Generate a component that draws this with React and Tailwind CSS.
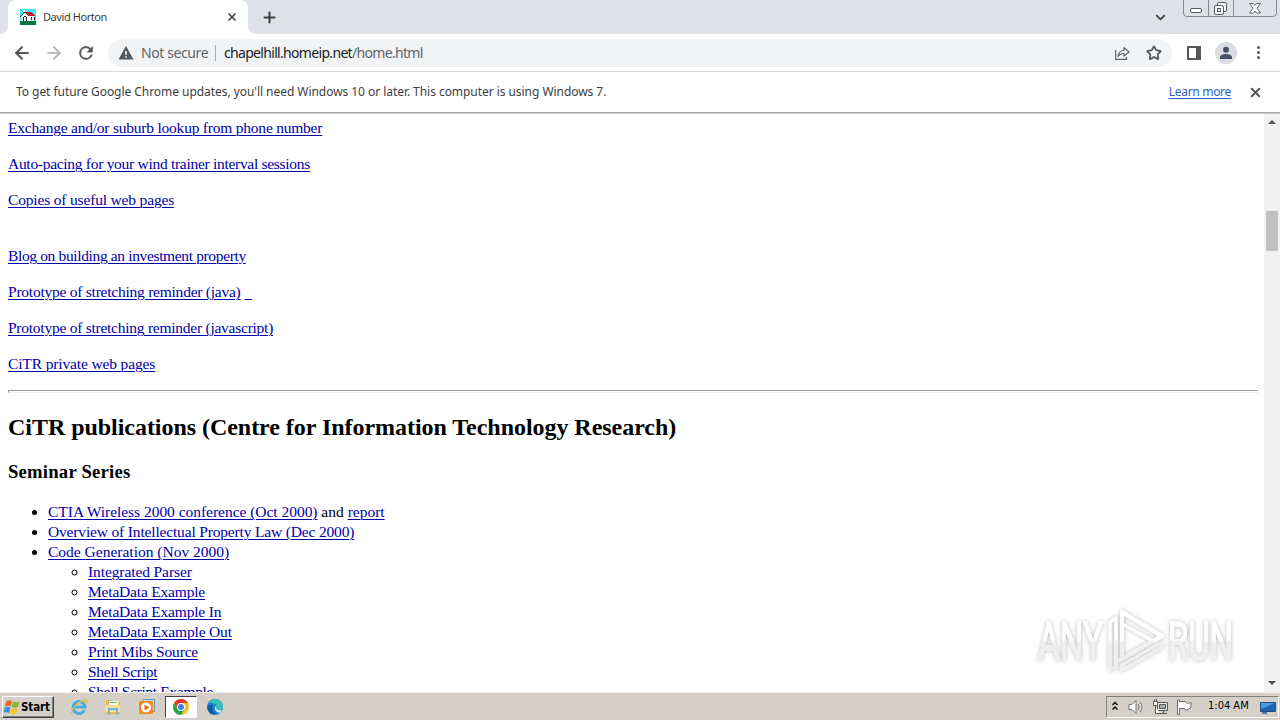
import { ArrowLeft, ArrowRight, ChevronDown, Plus, Star, X } from "lucide-react";

const topLinks = [
  { label: "Exchange and/or suburb lookup from phone number", style: "tracking-[-0.22px]" },
  { label: "Auto-pacing for your wind trainer interval sessions", style: "tracking-[-0.29px]" },
  { label: "Copies of useful web pages", style: "tracking-[-0.17px] mb-9" },
  { label: "Blog on building an investment property", style: "tracking-[-0.36px]" },
  { label: "Prototype of stretching reminder (java)", style: "tracking-[-0.24px]", trailing: true },
  { label: "Prototype of stretching reminder (javascript)", style: "tracking-[-0.25px]" },
  { label: "CiTR private web pages", style: "tracking-[-0.14px]" }
];

const codeLinks = [
  { label: "Integrated Parser", style: "tracking-[-0.1px]" },
  { label: "MetaData Example", style: "tracking-[-0.19px]" },
  { label: "MetaData Example In", style: "tracking-[-0.19px]" },
  { label: "MetaData Example Out", style: "tracking-[-0.17px]" },
  { label: "Print Mibs Source", style: "tracking-[-0.16px]" },
  { label: "Shell Script", style: "tracking-[-0.3px]" },
  { label: "Shell Script Example", style: "tracking-[-0.33px]" }
];

function Link({ children, className = "" }) {
  return (
    <a href="#" className={`text-[#0000a8] underline decoration-1 underline-offset-2 ${className}`}>
      {children}
    </a>
  );
}

function HouseIcon() {
  return (
    <svg className="h-4 w-4" viewBox="0 0 16 16" shapeRendering="crispEdges">
      <rect width="16" height="16" fill="#3fe8f0" />
      <rect y="12" width="16" height="4" fill="#087840" />
      <path d="M1 7l4-3 4 3h5v5H1z" fill="#fff" />
      <path d="M5 3h7l3 4H9z" fill="#d61a1a" />
      <path d="M0 8l5-5 4 4" fill="none" stroke="#333" />
      <path d="M3 8h1v4H3zM6 8h1v4H6zM4 7h2v1H4zM11 8h1v3h-1zM14 8h1v3h-1z" fill="#222" />
      <path d="M3 1h2v2H3z" fill="#fff" />
    </svg>
  );
}

function TabStrip() {
  return (
    <div className="relative flex h-[34px] bg-[#dee1e6]">
      <div className="h-full w-2 bg-white">
        <div className="h-full rounded-br-lg bg-[#dee1e6]" />
      </div>
      <div className="flex h-full w-60 items-center rounded-t-lg bg-white pl-3 pr-[10px]">
        <HouseIcon />
        <span className="ml-[7px] flex-1 font-['Noto_Sans','Open_Sans',sans-serif] text-[11px] tracking-[-0.42px] text-[#3c4043]">
          David Horton
        </span>
        <X size={12} strokeWidth={3.4} color="#45494d" />
      </div>
      <div className="h-full w-2 bg-white">
        <div className="h-full rounded-bl-lg bg-[#dee1e6]" />
      </div>
      <div className="flex flex-1 items-center pl-[5px]">
        <Plus size={17} strokeWidth={2.9} color="#3c4043" />
      </div>
      <div className="mr-[15px] flex items-center">
        <ChevronDown size={15} strokeWidth={3.2} color="#45494d" />
      </div>
      <svg className="mr-[3px] h-[18px] w-[94px]" viewBox="0 0 94 18" fill="none" stroke="#85888f">
        <path d="M.5 0v13q0 3.500 3.500 3.500h86q3.500 0 3.500-3.500V0M25.500 0v16M50.500 0v16" />
        <rect x="7.500" y="8.500" width="11" height="4" rx="1.500" fill="#fff" stroke="#555960" />
        <g stroke="#555960" fill="#fff">
          <rect x="34.500" y="2.500" width="9" height="9" rx="1.500" />
          <rect x="31.500" y="5.500" width="9" height="9" rx="1.500" />
          <rect x="34.500" y="8.500" width="3" height="3" />
          <path d="M66.500 3.500h4l1.500 2 1.500-2h4l-3.500 4.700 3.500 4.800h-4l-1.500-2-1.500 2h-4l3.500-4.800z" strokeWidth=".9" />
        </g>
      </svg>
    </div>
  );
}

function Toolbar() {
  return (
    <div className="flex h-[38px] items-center border-b border-[#d5d7da] bg-white text-[#5f6368]">
      <ArrowLeft className="ml-3" size={20} strokeWidth={2.5} color="#54575b" />
      <ArrowRight className="ml-3" size={20} strokeWidth={2.5} color="#b9bbbe" />
      <svg className="ml-3 h-5 w-5" viewBox="0 0 24 24" fill="#54575b" stroke="#54575b" strokeWidth=".4">
        <path d="M17.65 6.350A7.960 7.960 0 0 0 12 4a8 8 0 1 0 7.730 10h-2.080A6 6 0 1 1 12 6c1.660 0 3.140.690 4.220 1.780L13 11h7V4z" />
      </svg>
      <div className="ml-3 flex h-7 w-[1064px] items-center rounded-full bg-[#f1f3f4] pl-[10px] pr-[10px] font-['Noto_Sans','Open_Sans',sans-serif] text-[14px]">
        <svg className="h-4 w-4" viewBox="0 0 16 16">
          <path d="M8 1l7.500 13.500H.5z" fill="#54575b" />
          <path d="M8 6v4M8 11.200v1.600" stroke="#fff" strokeWidth="1.500" />
        </svg>
        <span className="ml-[7px] w-[66px] whitespace-nowrap tracking-[-0.4px]">Not secure</span>
        <div className="mx-2 h-4 w-px bg-[#a9acb0]" />
        <span className="flex-1 whitespace-nowrap tracking-[-0.68px]">
          <span className="text-[#202124]">chapelhill.homeip.net</span>/home.html
        </span>
        <svg className="mr-[15px] h-4 w-[17px]" viewBox="0 0 17 16" fill="none" stroke="#5f6368" strokeWidth="1.200">
          <path d="M1.600 5v9.400h10.800V12" />
          <path d="M4 11.500c.5-4 2.500-6 6-6V2.500L15 7l-5 4V8.500c-3 0-4.500 1-6 3z" strokeLinejoin="round" />
        </svg>
        <Star size={16} strokeWidth={2.6} strokeLinejoin="miter" color="#54575b" />
      </div>
      <svg className="ml-[15px] h-[14px] w-[14px]" viewBox="0 0 14 14">
        <path d="M1 1h12v12H1z" fill="#fff" stroke="#54575b" strokeWidth="2" />
        <path d="M9 0h5v14H9z" fill="#54575b" />
      </svg>
      <svg className="ml-[14px] h-[22px] w-[22px]" viewBox="0 0 22 22">
        <circle cx="11" cy="11" r="11" fill="#dadde2" />
        <circle cx="11" cy="7.800" r="3" fill="#46506a" />
        <path d="M5 17v-1.500c0-2.400 3-3.500 6-3.500s6 1.100 6 3.500V17z" fill="#46506a" />
      </svg>
      <div className="ml-5 flex w-[3px] flex-col gap-0.5">
        <i className="size-[3px] rounded-full bg-[#54575b]" />
        <i className="size-[3px] rounded-full bg-[#54575b]" />
        <i className="size-[3px] rounded-full bg-[#54575b]" />
      </div>
    </div>
  );
}

function InfoBar() {
  return (
    <div className="flex h-[40px] items-center bg-white pl-4 pr-[17px] font-['Noto_Sans','Open_Sans',sans-serif] text-[12px] text-[#3c4043]">
      <span className="flex-1 whitespace-nowrap tracking-[-0.05px]">
        To get future Google Chrome updates, you'll need Windows 10 or later. This computer is using Windows 7.
      </span>
      <a href="#" className="mr-[17px] tracking-[-0.3px] text-[#2a62c4] underline underline-offset-2">
        Learn more
      </a>
      <X size={15} strokeWidth={3.2} color="#54575b" />
    </div>
  );
}

function Page() {
  return (
    <main className="min-w-0 flex-1 overflow-hidden pl-2 pr-1.5 pt-1 font-['Liberation_Serif',serif] text-[15.5px] leading-5 text-black">
      {topLinks.map(({ label, style, trailing }) => (
        <p key={label} className={`mb-4 whitespace-nowrap ${style}`}>
          <Link>{label}</Link>
          {trailing && <Link className="ml-1 whitespace-pre">{"  "}</Link>}
        </p>
      ))}
      <hr className="h-[3px] border border-[#eeeeee] border-l-[#9a9a9a] border-t-[#9a9a9a]" />
      <h2 className="mt-[19px] whitespace-nowrap text-[24px] font-bold leading-[30px] tracking-[-0.04px]">
        CiTR publications (Centre for Information Technology Research)
      </h2>
      <h3 className="mt-[19px] text-[18.7px] font-bold leading-[21px] tracking-[0.2px]">Seminar Series</h3>
      <ul className="mt-5 list-disc pl-10">
        <li>
          <Link className="tracking-[-0.03px]">CTIA Wireless 2000 conference (Oct 2000)</Link> and <Link>report</Link>
        </li>
        <li>
          <Link className="tracking-[-0.165px]">Overview of Intellectual Property Law (Dec 2000)</Link>
        </li>
        <li>
          <Link>Code Generation (Nov 2000)</Link>
          <ul className="list-[circle] pl-10">
            {codeLinks.map(({ label, style }) => (
              <li key={label}>
                <Link className={style}>{label}</Link>
              </li>
            ))}
          </ul>
        </li>
      </ul>
    </main>
  );
}

function ScrollBar() {
  return (
    <div className="flex w-4 flex-col items-center bg-[#f1f1f1] pb-[7px] pt-1.5">
      <div className="border-x-4 border-b-4 border-x-transparent border-b-[#505050]" />
      <div className="mt-[87px] h-10 w-3 bg-[#c1c1c1]" />
      <div className="mt-auto border-x-4 border-t-4 border-x-transparent border-t-[#505050]" />
    </div>
  );
}

function Watermark() {
  return (
    <svg className="absolute left-[1030px] top-[600px] h-20 w-[230px]" viewBox="0 0 230 80">
      <defs>
        <linearGradient id="fade" x1="0" y1="0" x2="0" y2="80" gradientUnits="userSpaceOnUse">
          <stop offset=".5" stopColor="#fff" />
          <stop offset=".52" stopColor="#efefef" />
        </linearGradient>
        <filter id="soft" x="-10%" y="-10%" width="120%" height="120%">
          <feDropShadow dx="0" dy="0" stdDeviation="2" floodColor="#000" floodOpacity=".3" />
        </filter>
      </defs>
      <g filter="url(#soft)" fill="url(#fade)" fontFamily="Roboto, sans-serif" fontSize="53">
        <g stroke="url(#fade)" strokeWidth=".8">
          <text x="8" y="60" textLength="65" lengthAdjust="spacingAndGlyphs">ANY</text>
          <text x="138" y="60" textLength="65" lengthAdjust="spacingAndGlyphs">RUN</text>
        </g>
        <g fill="none" stroke="url(#fade)" strokeWidth="4" strokeLinejoin="round" strokeLinecap="round">
          <path d="M92 56V12l40 24-42 24" />
          <path d="M86 18l-6 4v48l6-3M86 20v45M94 25l29 16-29 16M92 70l40-23v-4M92 70v-5l31-18" strokeWidth="3" />
        </g>
      </g>
    </svg>
  );
}

function ChromeLogo() {
  return (
    <svg className="h-4 w-4" viewBox="0 0 16 16">
      <circle cx="8" cy="8" r="8" fill="#f8c51c" />
      <path d="M1.100 4A8 8 0 0 1 15 4H8L5 10z" fill="#e33b2e" />
      <path d="M1.100 4A8 8 0 0 0 8 16l3.500-6H4.500z" fill="#25a24a" />
      <circle cx="8" cy="8" r="4" fill="#fff" />
      <circle cx="8" cy="8" r="3" fill="#3f7de8" />
    </svg>
  );
}

function TaskBar() {
  return (
    <footer className="flex h-[28px] items-center border-t border-[#f4f2ee] bg-[#d4d0c8]">
      <button className="ml-[2px] flex h-[22px] w-[52px] items-center whitespace-nowrap border border-b-[#404040] border-l-white border-r-[#404040] border-t-white pl-px font-['DejaVu_Sans_Condensed','DejaVu_Sans',sans-serif] text-[11.5px] font-bold tracking-[-0.1px] text-black shadow-[inset_-1px_-1px_0_#808080]">
        <svg className="mr-px h-4 w-4 shrink-0" viewBox="0 0 16 16">
          <path d="M2.500 2Q5 .5 8 2L6.500 7.500Q4 6 1 7.500z" fill="#ef6226" />
          <path d="M9 2.500q3 1.500 6.500 0L14 8q-3 1.500-6.500 0z" fill="#83bb35" />
          <path d="M.8 8.500q3-1.500 5.500 0L5 14q-3-1.500-5.500 0z" fill="#3a91dc" />
          <path d="M7.200 9q3 1.500 6.500 0l-1.500 5.500q-3 1.500-6.500 0z" fill="#f9c322" />
        </svg>
        <span className="pt-0.5">Start</span>
      </button>

      <svg className="ml-4 h-[18px] w-[18px]" viewBox="0 0 18 18" fill="none">
        <path d="M14.500 12A6 6 0 1 1 15 9H4" stroke="#4bacdf" strokeWidth="3" />
        <path d="M2 16c-3-3 7-14 14-14 2 1 0 3-1 4" stroke="#e9bf42" strokeWidth="1.400" />
      </svg>
      <svg className="ml-[16px] h-[18px] w-[18px]" viewBox="0 0 18 18">
        <path d="M2 2h5l1 2h8v12H2z" fill="#e2b956" />
        <path d="M5 3h9v5H5z" fill="#f8fbfd" />
        <path d="M6 4h7v1H6z" fill="#6fb35a" />
        <path d="M1 7h15v7H1z" fill="#f5df93" />
        <path d="M5 17v-6h8v6" fill="none" stroke="#74b6dc" strokeWidth="2" />
      </svg>
      <svg className="ml-[16px] h-[18px] w-[18px]" viewBox="0 0 18 18">
        <path d="M5 1.500h11.500v12H5z" fill="#bfdff2" stroke="#679bc2" />
        <rect x="1" y="3" width="14" height="13" rx="1" fill="#f28b18" />
        <circle cx="8" cy="9.500" r="5" fill="#fff" />
        <path d="M6.500 6.500l5 3-5 3z" fill="#e36d0b" />
      </svg>
      <div className="ml-[9px] flex h-[22px] w-8 items-center justify-center border border-b-white border-l-[#404040] border-r-white border-t-[#404040] bg-white">
        <ChromeLogo />
      </div>
      <svg className="ml-[10px] h-4 w-4" viewBox="0 0 16 16">
        <circle cx="8" cy="8" r="8" fill="#1683d2" />
        <path d="M1 5Q4 0 9 0q6 1 7 7 0 4-4 4-3 0-3-2 1-4-3-5-3-1-5 1z" fill="#37c2b1" />
        <path d="M6 7q-2 6 3 8-7 2-9-7 3-4 6-1z" fill="#0c59a4" />
        <path d="M9 7q-1 5 6 4l-2 3q-6-1-5-6z" fill="#d4e9ef" />
      </svg>

      <div className="ml-auto mr-px flex h-[22px] w-[173px] items-center border border-b-white border-l-[#808080] border-r-white border-t-[#808080]">
        <svg className="mb-0.5 ml-1 h-3 w-2" viewBox="0 0 8 12" fill="none" stroke="#111" strokeWidth="1.500">
          <path d="M1.500 5L4 2.500 6.500 5M1.500 9.500L4 7l2.500 2.500" />
        </svg>
        <svg className="ml-[9px] h-4 w-[18px]" viewBox="0 0 18 16" fill="none" stroke="#777">
          <path d="M1 5.500h3l4-4v13l-4-4H1z" fill="#fff" />
          <path d="M10 5q2 3 0 6M12 3q4 5 0 10" />
        </svg>
        <svg className="ml-[6px] h-4 w-[18px]" viewBox="0 0 18 16" fill="none" stroke="#55585b">
          <path d="M5.500 3.500h10v8h-10zM8 14.500h7M11.500 12v2" fill="#e8e8e6" />
          <path d="M7.500 5.500h6v4h-6z" fill="#a8acae" />
          <path d="M1.500 2.500h4v4h-4zM2.500 0v2M4.500 0v2M3.500 7v7.500H8" fill="#fff" />
        </svg>
        <svg className="ml-[6px] h-4 w-4" viewBox="0 0 16 16" fill="#fff" stroke="#6c6c6c">
          <path d="M1.500 1v14.500h2V9.500h5l1 1.500c2 0 4-1 5.500-3V3.500c-2 1-3 1-4.500.5L9.500 2.500h-6V1z" />
        </svg>
        <span className="ml-4 whitespace-nowrap font-['DejaVu_Sans_Condensed','DejaVu_Sans',sans-serif] text-[11px] tracking-[0px] text-black">
          1:04 AM
        </span>
        <svg className="ml-auto mr-0.5 h-3.5 w-4" viewBox="0 0 16 14">
          <path d="M.5 2.500h15v9H.5z" fill="#1f63b5" stroke="#244e82" />
          <path d="M1 3h14L1 9z" fill="#4a9ae6" />
          <path d="M2 13h5" stroke="#5d7894" strokeWidth="2" />
        </svg>
      </div>
    </footer>
  );
}

export default function App() {
  return (
    <div className="relative flex h-[720px] w-[1280px] flex-col overflow-hidden bg-white">
      <TabStrip />
      <Toolbar />
      <InfoBar />
      <div className="h-[2px] shrink-0 border-t border-[#aaaaaa] bg-[#cccccc]" />
      <div className="flex min-h-0 flex-1">
        <Page />
        <ScrollBar />
      </div>
      <TaskBar />
      <Watermark />
    </div>
  );
}
